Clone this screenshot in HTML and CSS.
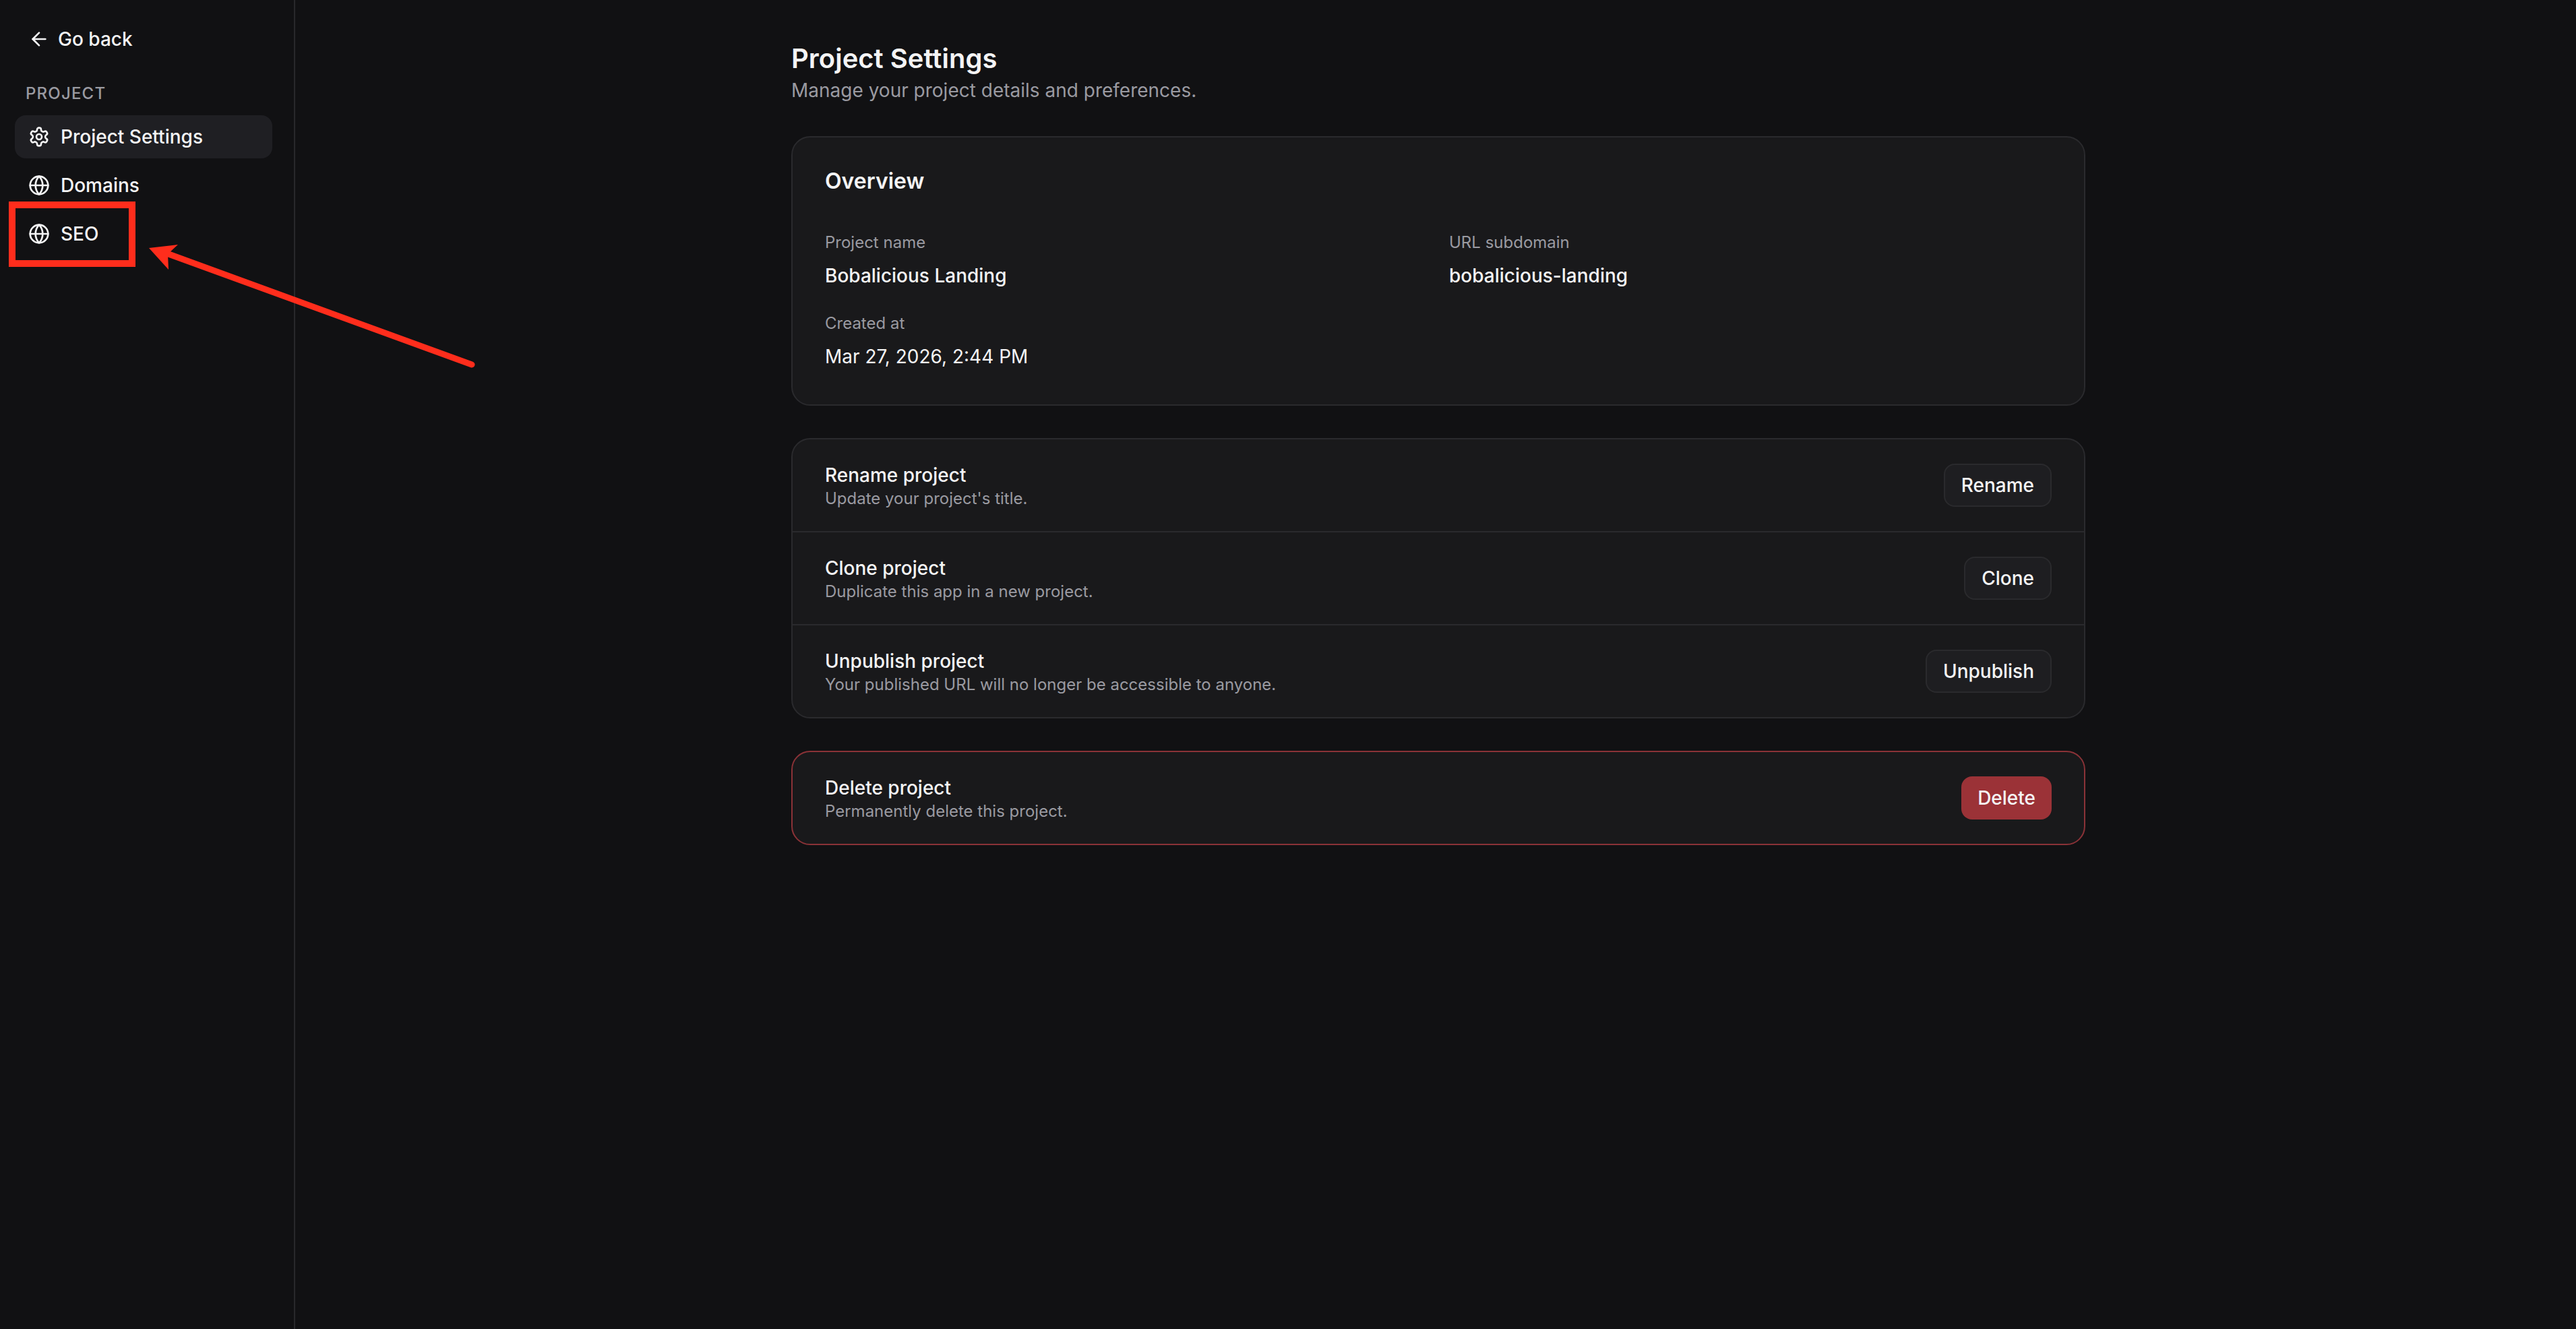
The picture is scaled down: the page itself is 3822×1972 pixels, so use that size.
FILE: index.html
```html
<!DOCTYPE html>
<html lang="en">
<head>
    <meta charset="UTF-8">
    <meta name="viewport" content="width=device-width, initial-scale=1.0">
    <title>Project Settings</title>
    <link rel="stylesheet" href="styles.css">
</head>
<body>
    <aside class="sidebar">
        <a class="back-link" href="#">
            <svg class="icon" viewBox="0 0 24 24"><path d="m12 19-7-7 7-7"/><path d="M19 12H5"/></svg>
            Go back
        </a>
        <div class="section-label">PROJECT</div>
        <nav class="nav">
            <a class="nav-item active" href="#">
                <svg class="icon" viewBox="0 0 24 24"><path d="M12.22 2h-.44a2 2 0 0 0-2 2v.18a2 2 0 0 1-1 1.73l-.43.25a2 2 0 0 1-2 0l-.15-.08a2 2 0 0 0-2.73.73l-.22.38a2 2 0 0 0 .73 2.73l.15.1a2 2 0 0 1 1 1.72v.51a2 2 0 0 1-1 1.74l-.15.09a2 2 0 0 0-.73 2.73l.22.38a2 2 0 0 0 2.73.73l.15-.08a2 2 0 0 1 2 0l.43.25a2 2 0 0 1 1 1.73V20a2 2 0 0 0 2 2h.44a2 2 0 0 0 2-2v-.18a2 2 0 0 1 1-1.73l.43-.25a2 2 0 0 1 2 0l.15.08a2 2 0 0 0 2.73-.73l.22-.39a2 2 0 0 0-.73-2.73l-.15-.08a2 2 0 0 1-1-1.74v-.5a2 2 0 0 1 1-1.74l.15-.09a2 2 0 0 0 .73-2.73l-.22-.38a2 2 0 0 0-2.73-.73l-.15.08a2 2 0 0 1-2 0l-.43-.25a2 2 0 0 1-1-1.73V4a2 2 0 0 0-2-2z"/><circle cx="12" cy="12" r="3"/></svg>
                Project Settings
            </a>
            <a class="nav-item" href="#">
                <svg class="icon" viewBox="0 0 24 24"><circle cx="12" cy="12" r="10"/><path d="M12 2a14.5 14.5 0 0 0 0 20 14.5 14.5 0 0 0 0-20"/><path d="M2 12h20"/></svg>
                Domains
            </a>
            <a class="nav-item" href="#">
                <svg class="icon" viewBox="0 0 24 24"><circle cx="12" cy="12" r="10"/><path d="M12 2a14.5 14.5 0 0 0 0 20 14.5 14.5 0 0 0 0-20"/><path d="M2 12h20"/></svg>
                SEO
            </a>
        </nav>
    </aside>

    <main class="content">
        <h1>Project Settings</h1>
        <p class="subtitle">Manage your project details and preferences.</p>

        <section class="card overview">
            <h2>Overview</h2>
            <div class="overview-grid">
                <div>
                    <div class="field-label">Project name</div>
                    <div class="field-value">Bobalicious Landing</div>
                </div>
                <div>
                    <div class="field-label">URL subdomain</div>
                    <div class="field-value">bobalicious-landing</div>
                </div>
                <div>
                    <div class="field-label">Created at</div>
                    <div class="field-value date">Mar 27, 2026, 2:44 PM</div>
                </div>
            </div>
        </section>

        <section class="card">
            <div class="row">
                <div class="row-text">
                    <div class="row-title">Rename project</div>
                    <div class="row-desc">Update your project's title.</div>
                </div>
                <button type="button" class="btn">Rename</button>
            </div>
            <div class="row">
                <div class="row-text">
                    <div class="row-title">Clone project</div>
                    <div class="row-desc">Duplicate this app in a new project.</div>
                </div>
                <button type="button" class="btn">Clone</button>
            </div>
            <div class="row">
                <div class="row-text">
                    <div class="row-title">Unpublish project</div>
                    <div class="row-desc">Your published URL will no longer be accessible to anyone.</div>
                </div>
                <button type="button" class="btn">Unpublish</button>
            </div>
        </section>

        <section class="card danger">
            <div class="row">
                <div class="row-text">
                    <div class="row-title">Delete project</div>
                    <div class="row-desc">Permanently delete this project.</div>
                </div>
                <button type="button" class="btn btn-danger">Delete</button>
            </div>
        </section>
    </main>

    <!-- red annotation drawn on top of the screenshot -->
    <div class="callout-box"></div>
    <svg class="callout-arrow" viewBox="0 0 800 600">
        <path class="arrow-line" d="M700 541 242 374"/>
        <polygon class="arrow-head" points="221,368 264,363 249,377 250,400"/>
    </svg>
</body>
</html>
```

FILE: styles.css
```css
* {
    box-sizing: border-box;
}

body {
    margin: 0;
    height: 1972px;
    display: flex;
    background-color: #111113;
    color: #f4f4f5;
    font-family: Inter, "Liberation Sans", sans-serif;
    overflow: hidden;
}

a {
    color: inherit;
    text-decoration: none;
}

.icon {
    width: 32px;
    height: 32px;
    flex-shrink: 0;
    fill: none;
    stroke: currentColor;
    stroke-width: 2;
    stroke-linecap: round;
    stroke-linejoin: round;
}

/* Sidebar */
.sidebar {
    width: 438px;
    flex-shrink: 0;
    padding: 38px 32px 0 22px;
    border-right: 2px solid #28282b;
}

.back-link {
    display: flex;
    align-items: center;
    gap: 12px;
    height: 40px;
    padding-left: 20px;
    font-size: 28px;
    font-weight: 500;
}

.section-label {
    margin-top: 45px;
    padding-left: 16px;
    font-size: 24px;
    line-height: 32px;
    font-weight: 500;
    letter-spacing: 1.2px;
    color: #9a9aa1;
}

.nav {
    display: flex;
    flex-direction: column;
    gap: 8px;
    margin-top: 16px;
}

.nav-item {
    display: flex;
    align-items: center;
    gap: 16px;
    height: 64px;
    padding-left: 20px;
    border-radius: 16px;
    font-size: 28px;
    font-weight: 500;
}

.nav-item.active {
    background-color: #1f1f23;
}

/* Main column */
.content {
    width: 1920px;
    margin-left: 736px;
    padding-top: 60px;
}

h1 {
    margin: 0;
    font-size: 40px;
    line-height: 54px;
    font-weight: 600;
}

.subtitle {
    margin: 0 0 48px;
    font-size: 28px;
    line-height: 40px;
    color: #9a9aa1;
}

.card {
    margin-bottom: 48px;
    background-color: #19191b;
    border: 2px solid #2a2a2d;
    border-radius: 28px;
}

.overview {
    padding: 50px 48px 51px;
}

.overview h2 {
    margin: 0 0 60px;
    font-size: 32px;
    line-height: 30px;
    font-weight: 600;
}

.overview-grid {
    display: grid;
    grid-template-columns: 1fr 1fr;
    column-gap: 32px;
    row-gap: 35px;
}

.field-label {
    font-size: 24px;
    line-height: 32px;
    color: #9a9aa1;
}

.field-value {
    margin-top: 13px;
    font-size: 28px;
    line-height: 40px;
    font-weight: 500;
}

.field-value.date {
    font-weight: 400;
}

.row {
    display: flex;
    align-items: center;
    justify-content: space-between;
    height: 136px;
    padding: 0 48px;
}

.row + .row {
    height: 138px;
    border-top: 2px solid #2a2a2d;
}

.row-text {
    padding-top: 3px;
}

.row-title {
    font-size: 28px;
    line-height: 36px;
    font-weight: 500;
}

.row-desc {
    margin-top: 1px;
    font-size: 24px;
    line-height: 32px;
    color: #9a9aa1;
}

.btn {
    height: 64px;
    padding: 0 24px;
    background-color: #1e1e21;
    border: 2px solid #2a2a2d;
    border-radius: 16px;
    color: #f4f4f5;
    font-family: inherit;
    font-size: 28px;
    font-weight: 500;
}

.danger {
    border-color: #8a3237;
}

.btn-danger {
    padding: 0 24px;
    background-color: #9b3237;
    border: 0;
}

/* Annotation */
.callout-box {
    position: absolute;
    left: 13px;
    top: 299px;
    width: 188px;
    height: 97px;
    border: 10px solid #ff2d1c;
}

.callout-arrow {
    position: absolute;
    left: 0;
    top: 0;
    width: 800px;
    height: 600px;
}

.arrow-line {
    fill: none;
    stroke: #ff2d1c;
    stroke-width: 9;
    stroke-linecap: round;
}

.arrow-head {
    fill: #ff2d1c;
}
```
